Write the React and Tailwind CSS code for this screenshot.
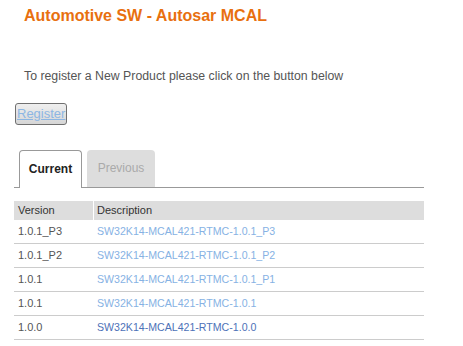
import React from "react";

const releases = [
  { version: "1.0.1_P3", name: "SW32K14-MCAL421-RTMC-1.0.1_P3" },
  { version: "1.0.1_P2", name: "SW32K14-MCAL421-RTMC-1.0.1_P2" },
  { version: "1.0.1", name: "SW32K14-MCAL421-RTMC-1.0.1_P1" },
  { version: "1.0.1", name: "SW32K14-MCAL421-RTMC-1.0.1" },
  { version: "1.0.0", name: "SW32K14-MCAL421-RTMC-1.0.0", visited: true },
];

function App() {
  return (
    <div className="w-[463px] h-[346px] overflow-hidden bg-white font-['Liberation_Sans',Arial,sans-serif]">
      <h1 className="pl-6 pt-[5px] text-[16px] leading-[22px] font-bold text-[#e8700f]">
        Automotive SW - Autosar MCAL
      </h1>

      <p className="mt-[41px] pl-6 text-[12.3px] leading-4 text-[#555]">
        To register a New Product please click on the button below
      </p>

      <button className="ml-[15px] mt-[19px] flex h-[22px] items-center rounded-[3px] border border-[#707070] bg-gradient-to-b from-[#efefef] to-[#d6d6d6] px-[1px] text-[13px] text-[#8db6e3] underline">
        Register
      </button>

      {/* tabs */}
      <div className="ml-[14px] mt-[25px] flex w-[410px] gap-[5px] border-b border-[#999] pl-[5px]">
        <div className="-mb-[1px] flex h-[38px] w-[63px] items-center justify-center rounded-t-[4px] border border-b-0 border-[#999] bg-white pb-[2px] text-[12px] font-bold text-[#222]">
          Current
        </div>
        <div className="flex h-[37px] w-[68px] items-center justify-center rounded-t-[4px] bg-[#dddddd] pb-[2px] text-[12px] text-[#aaa]">
          Previous
        </div>
      </div>

      {/* table */}
      <div className="ml-[14px] mt-[13px] w-[410px] text-[11px]">
        <div className="flex h-[19px] gap-[1px] text-[#333]">
          <div className="flex w-[79px] items-center bg-[#dddddd] pl-1">Version</div>
          <div className="flex flex-1 items-center bg-[#dddddd] pl-[3px]">Description</div>
        </div>
        {releases.map((r, i) => (
          <div key={i} className="flex h-[24px] border-b border-[#cccccc]">
            <div className="flex w-[80px] items-center pl-1 text-[#555]">{r.version}</div>
            <div
              className={`flex flex-1 items-center pl-[3px] text-[10.6px] ${
                r.visited ? "text-[#4d72b8]" : "text-[#86b2e4]"
              }`}
            >
              {r.name}
            </div>
          </div>
        ))}
      </div>
    </div>
  );
}

export default App;
